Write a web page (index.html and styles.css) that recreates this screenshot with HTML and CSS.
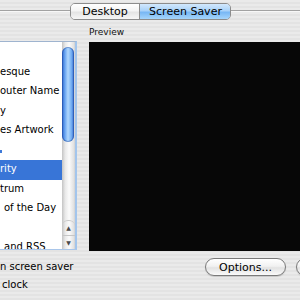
FILE: index.html
```html
<!DOCTYPE html>
<html lang="en">
<head>
    <meta charset="UTF-8">
    <meta name="viewport" content="width=device-width, initial-scale=1.0">
    <title>Desktop &amp; Screen Saver</title>
    <link rel="stylesheet" href="styles.css">
</head>
<body>
    <div class="tabbar">
        <div class="segmented">
            <span class="segment">Desktop</span>
            <span class="segment selected">Screen Saver</span>
        </div>
    </div>

    <div class="pane">
        <div class="listbox">
            <div class="items">
                <div class="item">esque</div>
                <div class="item">outer Name</div>
                <div class="item">y</div>
                <div class="item">es Artwork</div>
                <div class="item"><span class="mark"></span></div>
                <div class="item selected">rity</div>
                <div class="item">trum</div>
                <div class="item indent">of the Day</div>
                <div class="item"></div>
                <div class="item indent">and RSS</div>
            </div>
            <div class="scrollbar">
                <div class="track">
                    <div class="thumb"></div>
                </div>
                <div class="arrows">
                    <span class="arrow">&#9650;</span>
                    <span class="arrow">&#9660;</span>
                </div>
            </div>
        </div>

        <div class="preview-col">
            <div class="label">Preview</div>
            <div class="preview"></div>
        </div>
    </div>

    <div class="options-row">
        <span class="check-label">n screen saver</span>
        <button class="pill">Options...</button>
        <button class="pill">Test</button>
    </div>
    <div class="clock-row">clock</div>
</body>
</html>
```

FILE: styles.css
```css
body {
    margin: 0;
    width: 300px;
    height: 300px;
    overflow: hidden;
    font-family: "Lucida Grande", "DejaVu Sans", sans-serif;
    font-size: 10px;
    color: #000;
    background: repeating-linear-gradient(#eaeaea 0 2px, #e3e3e3 2px 4px);
}

/* tab switcher sits on the top line of the tab box */
.tabbar {
    height: 22px;
    padding-top: 3px;
    box-sizing: border-box;
    background: linear-gradient(to bottom,
        transparent 10px, #a2a2a2 10px, #a2a2a2 11px,
        #f7f7f7 11px, #f7f7f7 12px, transparent 12px);
}
.segmented {
    display: flex;
    width: 161px;
    height: 17px;
    margin-left: 70px;
    border: 1px solid #8c8c8c;
    border-radius: 5px;
    box-sizing: border-box;
    overflow: hidden;
    font-size: 11px;
    line-height: 15px;
}
.segment {
    width: 68px;
    text-align: center;
    background: linear-gradient(#ffffff, #f4f4f4 45%, #e4e4e4 55%, #f6f6f6);
    border-right: 1px solid #8c8c8c;
}
.segment.selected {
    flex: 1;
    border-right: none;
    padding-left: 1px;
    background: linear-gradient(#d2e8fd, #a9d2f8 45%, #78b7f4 55%, #a5d5fb);
}

.pane {
    display: flex;
}

/* source list */
.listbox {
    display: flex;
    width: 77px;
    height: 209px;
    margin-top: 19px;
    flex-shrink: 0;
    box-sizing: border-box;
    background: #fff;
    border-top: 1px solid #9fb4cf;
    border-bottom: 1px solid #a9c6ea;
    border-right: 2px solid #a3c5ec;
}
.items {
    flex: 1;
    overflow: hidden;
    padding-top: 21px;
}
.item {
    height: 19.44px;
    line-height: 17px;
    white-space: nowrap;
}
.item.indent {
    padding-left: 4px;
}
.item.selected {
    background: #3875d7;
    color: #fff;
}
.mark {
    display: inline-block;
    width: 2px;
    height: 3px;
    background: #3f7ad8;
}
.scrollbar {
    width: 13px;
    display: flex;
    flex-direction: column;
    background: linear-gradient(to right, #c4c4c4, #e9e9e9 25%, #fbfbfb 55%, #e2e2e2 90%, #cfcfcf);
}
.track {
    flex: 1;
}
.thumb {
    height: 95px;
    margin: 5px 1px 0 0;
    border-radius: 6px;
    box-shadow: inset 0 0 0 1px rgba(30, 70, 150, 0.45);
    background: linear-gradient(to right, #2c64cc, #6aa6f2 25%, #b1d7fc 50%, #74aff3 78%, #3569cd);
}
.arrows {
    height: 28px;
    display: flex;
    flex-direction: column;
    border-top: 1px solid #c8c8c8;
    border-radius: 6px 6px 0 0;
}
.arrow {
    flex: 1;
    text-align: center;
    font-size: 6px;
    line-height: 13px;
    color: #4a4a4a;
}
.arrow + .arrow {
    border-top: 1px solid #c6c6c6;
}

/* preview */
.preview-col {
    flex: 1;
    margin-left: 12px;
    padding-top: 4px;
}
.label {
    font-size: 9px;
    line-height: 12px;
    margin-bottom: 4px;
    color: #111;
}
.preview {
    width: 220px;
    height: 209px;
    background: #070707;
}

/* bottom controls */
.options-row {
    display: flex;
    align-items: center;
    height: 18px;
    margin-top: 7px;
}
.check-label {
    flex: 0 0 205px;
    line-height: 18px;
}
.pill {
    flex-shrink: 0;
    width: 81px;
    height: 18px;
    margin-right: 10px;
    padding: 0;
    font-family: inherit;
    font-size: 11px;
    color: #000;
    border: 1px solid #7a7a7a;
    border-radius: 9px;
    background: linear-gradient(#ffffff, #f1f1f1 45%, #e2e2e2 55%, #fafafa);
    box-shadow: 0 1px 1px rgba(0, 0, 0, 0.15);
}
.clock-row {
    height: 18px;
    line-height: 18px;
    padding-left: 2px;
}
```
